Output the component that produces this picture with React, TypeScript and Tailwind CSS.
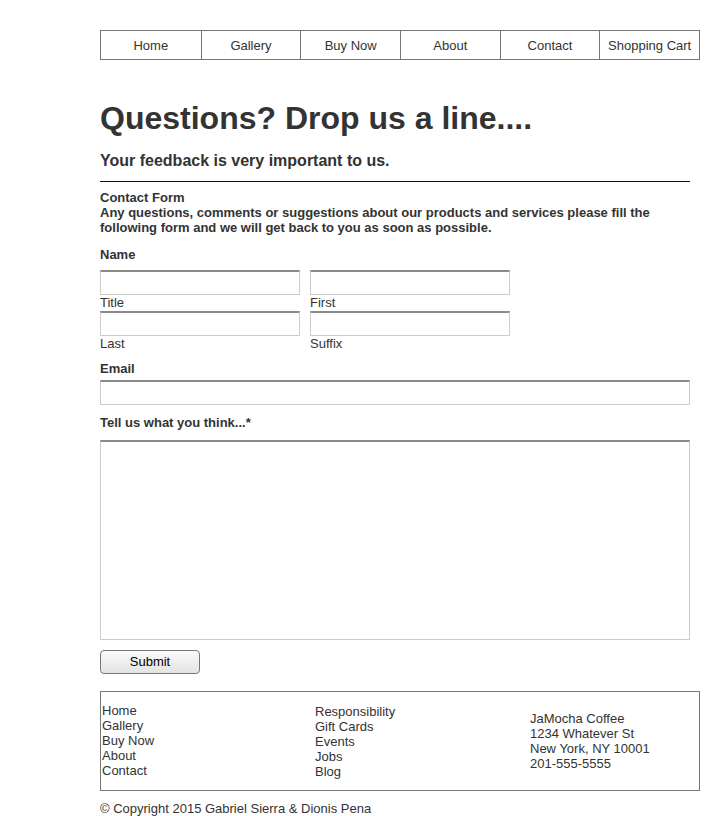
import React from "react";

const navItems = ["Home", "Gallery", "Buy Now", "About", "Contact", "Shopping Cart"];

const inputCls =
  "h-[25px] w-full border border-[#cccccc] border-t-2 border-t-[#8a8a8a] bg-white outline-none";

function NameField({ label }: { label: string }) {
  return (
    <div className="flex w-[200px] flex-col">
      <input type="text" className={inputCls} />
      <span className="text-[13px] leading-[15px]">{label}</span>
    </div>
  );
}

export default function App() {
  return (
    <div className="min-h-[816px] bg-white font-['Liberation_Sans',Arial,sans-serif] text-[#333333]">
      <div className="ml-[100px] flex w-[600px] flex-col pt-[30px]">
        {/* top nav */}
        <nav className="grid h-[30px] grid-cols-6 border border-[#777777] text-[13px]">
          {navItems.map((item, i) => (
            <a
              key={item}
              href="#"
              className={`flex items-center justify-center whitespace-nowrap pt-[2px] ${
                i > 0 ? "border-l border-[#777777]" : ""
              }`}
            >
              {item}
            </a>
          ))}
        </nav>

        <h1 className="mt-[40px] text-[32px] font-bold leading-[37px]">Questions? Drop us a line....</h1>
        <h3 className="mt-[15px] text-[16px] font-bold leading-[18px]">Your feedback is very important to us.</h3>

        <form className="mt-[11px] flex w-[590px] flex-col" onSubmit={(e) => e.preventDefault()}>
          <div className="h-px bg-[#111111]" />

          <div className="mt-[8px] text-[13px] font-bold leading-[15px]">
            <p>Contact Form</p>
            <p>
              Any questions, comments or suggestions about our products and services please fill the following
              form and we will get back to you as soon as possible.
            </p>
          </div>

          <label className="mt-[12px] text-[13px] font-bold leading-[15px]">Name</label>
          <div className="mt-[8px] flex flex-col gap-[1px]">
            <div className="flex gap-[10px]">
              <NameField label="Title" />
              <NameField label="First" />
            </div>
            <div className="flex gap-[10px]">
              <NameField label="Last" />
              <NameField label="Suffix" />
            </div>
          </div>

          <label className="mt-[10px] text-[13px] font-bold leading-[15px]">Email</label>
          <input type="email" className={`mt-[4px] ${inputCls}`} />

          <label className="mt-[10px] text-[13px] font-bold leading-[15px]">Tell us what you think...*</label>
          <textarea className="mt-[10px] h-[200px] w-full resize-none border border-[#cccccc] border-t-2 border-t-[#8a8a8a] bg-white outline-none" />

          <button
            type="submit"
            className="mt-[10px] h-[24px] w-[100px] rounded-[4px] border border-[#777777] bg-gradient-to-b from-[#fbfbfb] to-[#e3e3e3] text-[13px] text-black"
          >
            Submit
          </button>
        </form>

        {/* footer */}
        <footer className="mt-[17px] grid h-[100px] grid-cols-[213px_215px_1fr] items-center border border-[#777777] pl-[1px] text-[13px] leading-[15px]">
          <ul className="pb-[2px]">
            <li>Home</li>
            <li>Gallery</li>
            <li>Buy Now</li>
            <li>About</li>
            <li>Contact</li>
          </ul>
          <ul>
            <li>Responsibility</li>
            <li>Gift Cards</li>
            <li>Events</li>
            <li>Jobs</li>
            <li>Blog</li>
          </ul>
          <div>
            <p>JaMocha Coffee</p>
            <p>1234 Whatever St</p>
            <p>New York, NY 10001</p>
            <p>201-555-5555</p>
          </div>
        </footer>

        <p className="mt-[10px] text-[13px] leading-[15px]">© Copyright 2015 Gabriel Sierra &amp; Dionis Pena</p>
      </div>
    </div>
  );
}
